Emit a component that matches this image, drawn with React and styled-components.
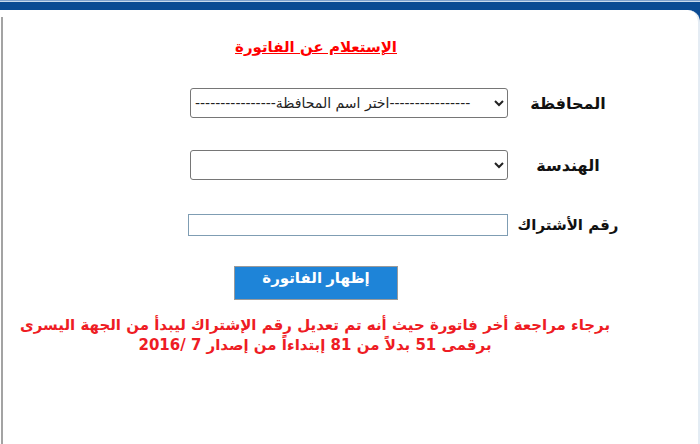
import React from 'react'
import styled, { createGlobalStyle } from 'styled-components'

const GlobalStyle = createGlobalStyle`
  html, body {
    margin: 0;
    padding: 0;
    background: #ffffff;
  }
  body {
    font-family: "DejaVu Sans", sans-serif;
  }
`

const Frame = styled.div`
  width: 700px;
  height: 444px;
  overflow: hidden;
  background: #0b4a93;
  display: flex;
  flex-direction: column;
`

const TopBar = styled.div`
  height: 10px;
  flex-shrink: 0;
  background: linear-gradient(#7fa0cc 0 1px, #c9d9ec 1px 2px, #0b4a93 2px);
`

const Sheet = styled.div`
  flex: 1;
  background: #ffffff;
  border-top-right-radius: 12px;
  border-right: 2px solid #e4ecf4;
  display: flex;
`

const Rail = styled.div`
  width: 2px;
  margin-left: 1px;
  margin-top: 7px;
  background: #a3a3a3;
  flex-shrink: 0;
`

const Content = styled.form`
  width: 624px;
  direction: rtl;
  display: flex;
  flex-direction: column;
  align-items: center;
`

const Title = styled.a`
  margin-top: 27px;
  margin-left: 2px;
  color: #ff0000;
  font-size: 15px;
  font-weight: bold;
  text-decoration: underline;
  line-height: 20px;
`

const Row = styled.div`
  align-self: stretch;
  display: flex;
  align-items: center;
  padding-right: 4px;
  margin-top: ${p => p.$top}px;
`

const Label = styled.label`
  width: 110px;
  text-align: center;
  font-size: ${p => p.$size || 16}px;
  font-weight: bold;
  color: #111;
  margin-left: 5px;
`

const Select = styled.select`
  direction: ltr;
  width: 318px;
  height: 30px;
  font-family: "DejaVu Sans", sans-serif;
  font-size: 14px;
  color: #222;
  border: 1px solid #767676;
  border-radius: 3px;
  background: #fff;
`

const TextInput = styled.input`
  width: 320px;
  height: 22px;
  box-sizing: border-box;
  border: 1px solid #7f9db3;
  padding: 0 4px;
  font-size: 13px;
`

const ShowButton = styled.button`
  margin-top: 30px;
  margin-left: 2px;
  width: 164px;
  height: 34px;
  box-sizing: border-box;
  border: 1px solid #9a9a9a;
  background: #1e84d8;
  color: #ffffff;
  font-family: "Liberation Sans", "DejaVu Sans", sans-serif;
  font-size: 15px;
  font-weight: bold;
  padding: 2px 0 0;
  display: flex;
  justify-content: center;
  align-items: flex-start;
`

const Notice = styled.p`
  margin: 15px 0 0;
  color: #ee1c24;
  font-size: 15px;
  font-weight: bold;
  line-height: 20px;
  text-align: center;
`

const App = () => {
  return (
    <>
      <GlobalStyle />
      <Frame>
        <TopBar />
        <Sheet>
          <Rail />
          <Content>
            <Title>الإستعلام عن الفاتورة</Title>
            <Row $top={31}>
              <Label>المحافظة</Label>
              <Select defaultValue="0">
                <option value="0">----------------اختر اسم المحافظة----------------</option>
              </Select>
            </Row>
            <Row $top={32}>
              <Label>الهندسة</Label>
              <Select defaultValue="">
                <option value=""></option>
              </Select>
            </Row>
            <Row $top={34}>
              <Label $size={15}>رقم الأشتراك</Label>
              <TextInput type="text" />
            </Row>
            <ShowButton type="button">إظهار الفاتورة</ShowButton>
            <Notice>
              برجاء مراجعة أخر فاتورة حيث أنه تم تعديل رقم الإشتراك ليبدأ من الجهة اليسرى
              <br />
              برقمى 51 بدلاً من 81 إبتداءاً من إصدار 7 /2016
            </Notice>
          </Content>
        </Sheet>
      </Frame>
    </>
  )
}

export default App
